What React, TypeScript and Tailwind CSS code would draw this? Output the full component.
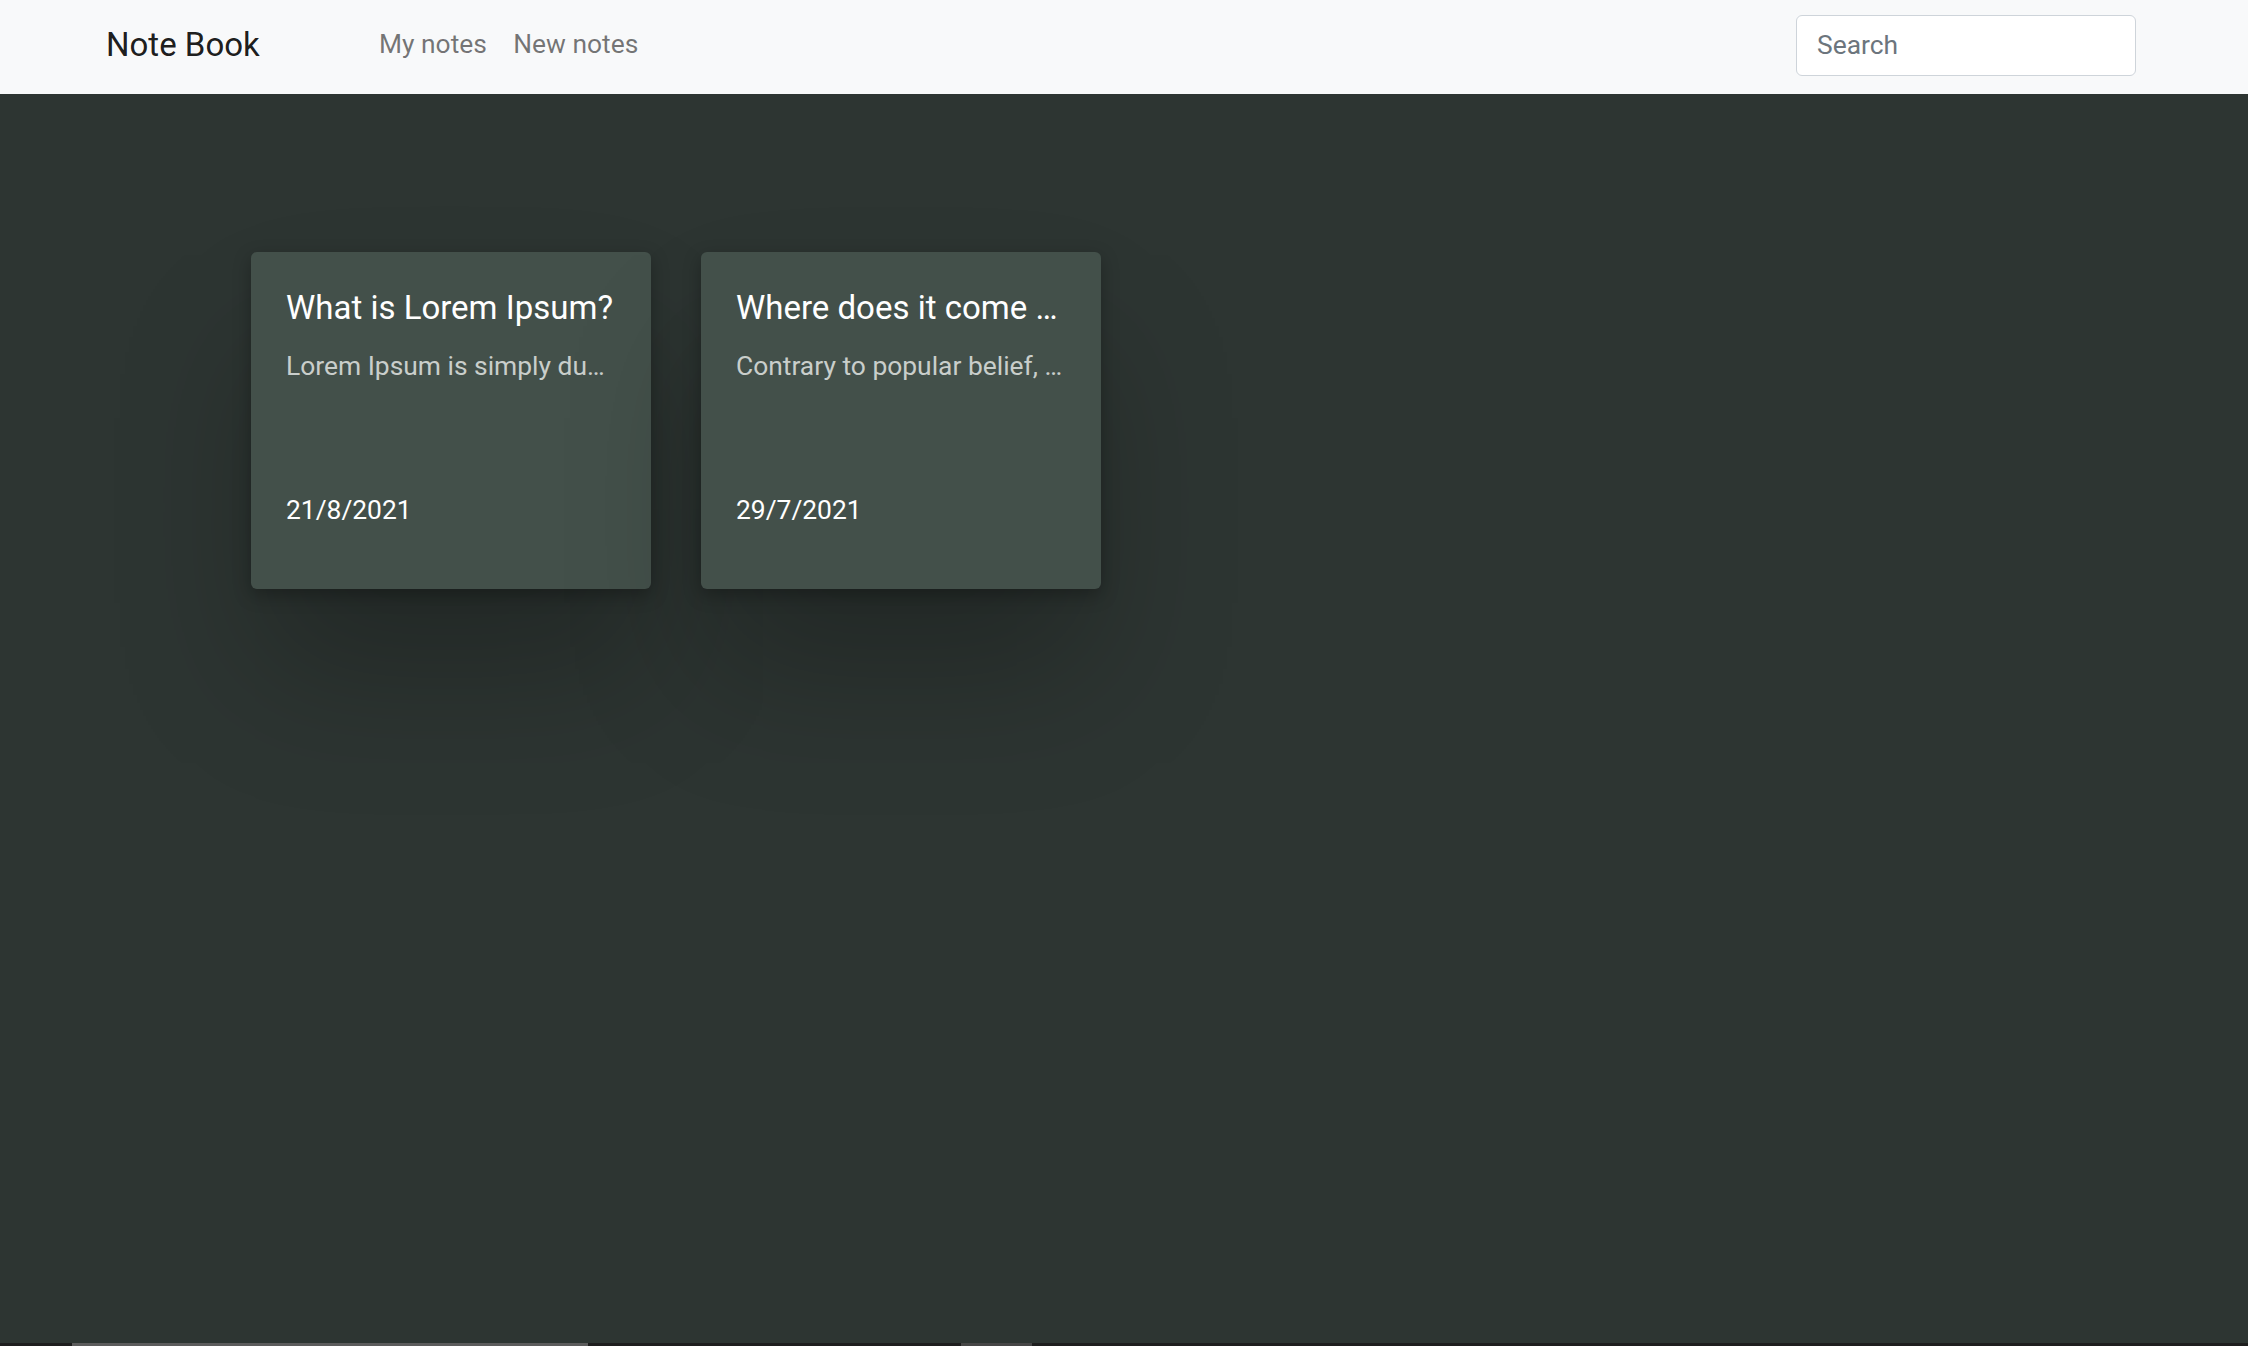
import React from "react";

const notes = [
  {
    title: "What is Lorem Ipsum?",
    body: "Lorem Ipsum is simply dummy text of the printing and typesetting industry.",
    date: "21/8/2021",
  },
  {
    title: "Where does it come from?",
    body: "Contrary to popular belief, Lorem Ipsum is not simply random text.",
    date: "29/7/2021",
  },
];

function NoteCard({ title, body, date }: { title: string; body: string; date: string }) {
  return (
    <div className="w-[400px] h-[337px] rounded-[6px] bg-[#43504a] px-[35px] pt-[35.5px] shadow-[0_6px_18px_rgba(0,0,0,0.28),0_90px_140px_-10px_rgba(0,0,0,0.25)]">
      <h5 className="truncate text-[33px] leading-[1.2] font-normal text-white mb-[19.5px]">{title}</h5>
      <p className="truncate text-[26.4px] leading-[1.5] text-[#c9cecb]">{body}</p>
      <p className="mt-[105px] text-[26.4px] leading-[1.5] text-white">{date}</p>
    </div>
  );
}

export default function App() {
  return (
    <div className="min-h-screen flex flex-col font-['Roboto','Liberation_Sans',sans-serif]">
      {/* Navbar */}
      <nav className="h-[94px] shrink-0 bg-[#f8f9fa] flex items-center pl-[106px] pr-[112px] pb-[4px]">
        <a className="text-[33px] leading-[1.5] text-black/90">Note Book</a>
        <ul className="flex ml-[106px]">
          <li className="px-[13.2px] text-[26.4px] leading-[1.5] text-black/55">My notes</li>
          <li className="px-[13.2px] text-[26.4px] leading-[1.5] text-black/55">New notes</li>
        </ul>
        <input
          type="text"
          placeholder="Search"
          className="ml-auto w-[340px] h-[61px] rounded-[6px] border border-[#ced4da] bg-white px-[20px] text-[26.4px] text-[#212529] placeholder:text-[#6c757d] outline-none"
        />
      </nav>

      {/* Notes */}
      <main className="flex-1 bg-[#2d3532] pt-[158px] pl-[251px] flex items-start gap-[50px]">
        {notes.map((n) => (
          <NoteCard key={n.date} {...n} />
        ))}
      </main>

      {/* Scrollbar remnant */}
      <div className="h-[3px] shrink-0 bg-[#1e1e1e] flex">
        <div className="w-[72px]" />
        <div className="w-[516px] bg-[#5c5c5c]" />
        <div className="w-[373px]" />
        <div className="w-[71px] bg-[#464646]" />
      </div>
    </div>
  );
}
